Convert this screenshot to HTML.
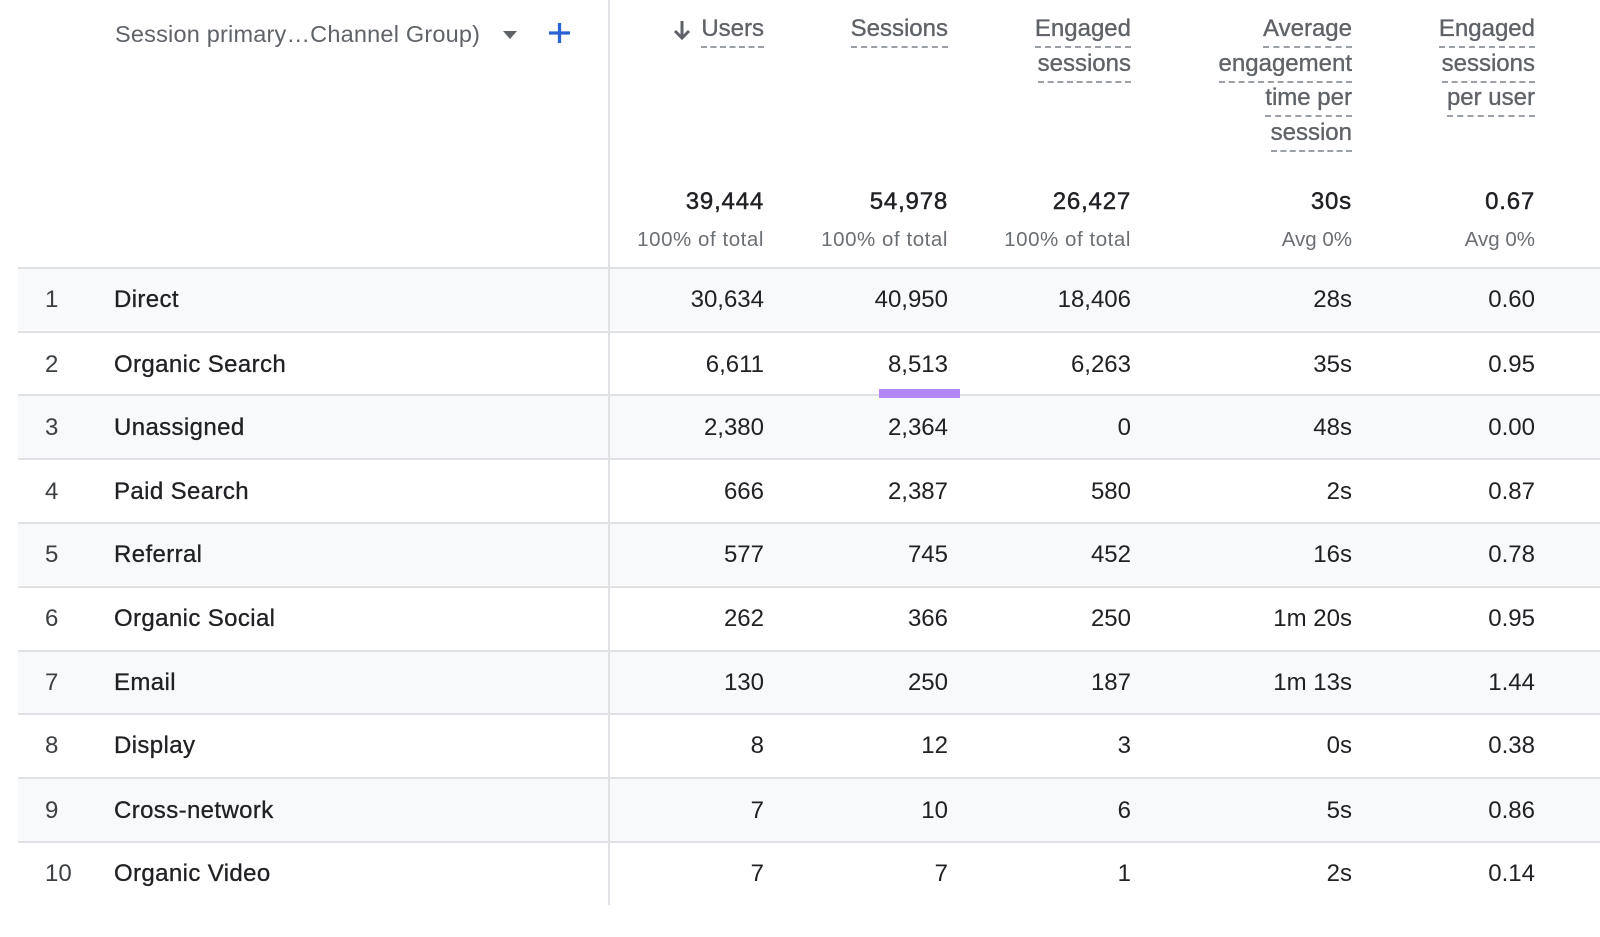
<!DOCTYPE html>
<html><head><meta charset="utf-8"><style>
html,body{margin:0;padding:0;background:#fff}
#p{position:relative;width:1600px;height:937px;overflow:hidden;background:#fff;font-family:"Liberation Sans",Arial,sans-serif;font-size:24px;color:#202124}
#p div{position:absolute;white-space:nowrap}
.r{left:18px;width:1582px;height:62px}
.alt{background:#f8f9fb}
.l{left:18px;width:1582px;height:2px;background:#dfe1e5}
.t{line-height:30px;top:17px}
.n{left:27px;color:#3c4043}
.a{left:96px;color:#202124;-webkit-text-stroke:.3px #202124;letter-spacing:.38px}
.c1{right:836px}.c2{right:652px}.c3{right:469px}.c4{right:248px}.c5{right:65px}
.x1{right:836px}.x2{right:652px}.x3{right:469px}.x4{right:248px}.x5{right:65px}
.h{color:#5f6368;line-height:30px;border-bottom:2px dashed #9aa0a6;height:32px;-webkit-text-stroke:.35px #5f6368}
.h2{line-height:31px;height:33px}
.h3{line-height:32px;height:33px}
.tot{top:187px;line-height:30px;color:#202124;-webkit-text-stroke:.45px #202124;letter-spacing:.8px}
.sub{top:226px;line-height:28px;font-size:20.5px;color:#6b6f74}
.w{letter-spacing:.55px}
</style></head><body><div id="p">
<div style="left:115px;top:19px;line-height:30px;color:#5f6368;font-size:23.5px;letter-spacing:.2px">Session primary…Channel Group)</div>
<svg style="position:absolute;left:503px;top:31px" width="14" height="8"><path d="M0 0H14L7 8Z" fill="#5f6368"/></svg>
<svg style="position:absolute;left:549px;top:22px" width="22" height="22"><path d="M0 11H21M10.500 1V21" stroke="#2a63d4" stroke-width="3.300" fill="none"/></svg>
<svg style="position:absolute;left:673px;top:20px" width="18" height="20"><path d="M9 1V18M2 11L9 18L16 11" stroke="#5f6368" stroke-width="3" fill="none"/></svg>

<div class="h c1" style="top:14px">Users</div>
<div class="h c2" style="top:14px">Sessions</div>
<div class="h c3" style="top:14px">Engaged</div>
<div class="h h2 c3" style="top:48px">sessions</div>
<div class="h c4" style="top:14px">Average</div>
<div class="h h2 c4" style="top:48px">engagement</div>
<div class="h h3 c4" style="top:82px">time per</div>
<div class="h h2 c4" style="top:117px">session</div>
<div class="h c5" style="top:14px">Engaged</div>
<div class="h h2 c5" style="top:48px">sessions</div>
<div class="h h3 c5" style="top:82px">per user</div>

<div class="tot c1">39,444</div><div class="tot c2">54,978</div><div class="tot c3">26,427</div><div class="tot c4">30s</div><div class="tot c5">0.67</div>
<div class="sub w c1">100% of total</div><div class="sub w c2">100% of total</div><div class="sub w c3">100% of total</div><div class="sub c4">Avg 0%</div><div class="sub c5">Avg 0%</div>

<div class="r alt" style="top:268px"><div class="t n">1</div><div class="t a">Direct</div><div class="t x1">30,634</div><div class="t x2">40,950</div><div class="t x3">18,406</div><div class="t x4">28s</div><div class="t x5">0.60</div></div>
<div class="r" style="top:333px"><div class="t n">2</div><div class="t a">Organic Search</div><div class="t x1">6,611</div><div class="t x2">8,513</div><div class="t x3">6,263</div><div class="t x4">35s</div><div class="t x5">0.95</div></div>
<div class="r alt" style="top:396px"><div class="t n">3</div><div class="t a">Unassigned</div><div class="t x1">2,380</div><div class="t x2">2,364</div><div class="t x3">0</div><div class="t x4">48s</div><div class="t x5">0.00</div></div>
<div class="r" style="top:460px"><div class="t n">4</div><div class="t a">Paid Search</div><div class="t x1">666</div><div class="t x2">2,387</div><div class="t x3">580</div><div class="t x4">2s</div><div class="t x5">0.87</div></div>
<div class="r alt" style="top:523px"><div class="t n">5</div><div class="t a">Referral</div><div class="t x1">577</div><div class="t x2">745</div><div class="t x3">452</div><div class="t x4">16s</div><div class="t x5">0.78</div></div>
<div class="r" style="top:587px"><div class="t n">6</div><div class="t a">Organic Social</div><div class="t x1">262</div><div class="t x2">366</div><div class="t x3">250</div><div class="t x4">1m 20s</div><div class="t x5">0.95</div></div>
<div class="r alt" style="top:651px"><div class="t n">7</div><div class="t a">Email</div><div class="t x1">130</div><div class="t x2">250</div><div class="t x3">187</div><div class="t x4">1m 13s</div><div class="t x5">1.44</div></div>
<div class="r" style="top:714px"><div class="t n">8</div><div class="t a">Display</div><div class="t x1">8</div><div class="t x2">12</div><div class="t x3">3</div><div class="t x4">0s</div><div class="t x5">0.38</div></div>
<div class="r alt" style="top:779px"><div class="t n">9</div><div class="t a">Cross-network</div><div class="t x1">7</div><div class="t x2">10</div><div class="t x3">6</div><div class="t x4">5s</div><div class="t x5">0.86</div></div>
<div class="r" style="top:842px"><div class="t n">10</div><div class="t a">Organic Video</div><div class="t x1">7</div><div class="t x2">7</div><div class="t x3">1</div><div class="t x4">2s</div><div class="t x5">0.14</div></div>

<div class="l" style="top:267px"></div>
<div class="l" style="top:331px"></div>
<div class="l" style="top:394px"></div>
<div class="l" style="top:458px"></div>
<div class="l" style="top:522px"></div>
<div class="l" style="top:586px"></div>
<div class="l" style="top:650px"></div>
<div class="l" style="top:713px"></div>
<div class="l" style="top:777px"></div>
<div class="l" style="top:841px"></div>
<div style="left:608px;top:0;width:2px;height:905px;background:#dfe1e5"></div>
<div style="left:879px;top:389px;width:81px;height:9px;background:#b388f6"></div>
</div></body></html>
